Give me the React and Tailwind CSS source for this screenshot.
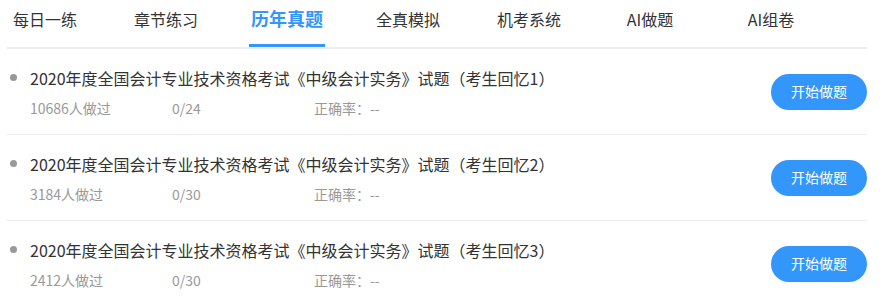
import React, { useState } from 'react';

const tabs = ['每日一练', '章节练习', '历年真题', '全真模拟', '机考系统', 'AI做题', 'AI组卷'];

const papers = [
  { title: '2020年度全国会计专业技术资格考试《中级会计实务》试题（考生回忆1）', done: 10686, progress: '0/24' },
  { title: '2020年度全国会计专业技术资格考试《中级会计实务》试题（考生回忆2）', done: 3184, progress: '0/30' },
  { title: '2020年度全国会计专业技术资格考试《中级会计实务》试题（考生回忆3）', done: 2412, progress: '0/30' },
];

const App = () => {
  const [activeTab, setActiveTab] = useState(2);

  return (
    <div
      className="w-[860px] ml-[7px] bg-white"
      style={{ fontFamily: '"Noto Sans CJK SC", "Noto Sans", sans-serif' }}
    >
      {/* Tabs */}
      <div className="flex gap-[45px] h-[49px] border-b-2 border-[#eeeeee]">
        {tabs.map((tab, index) => (
          <button
            key={tab}
            onClick={() => setActiveTab(index)}
            className={`w-[76px] h-[47px] flex items-start justify-center border-b-[3px] whitespace-nowrap ${
              activeTab === index
                ? 'border-[#3296fa] text-[#3296fa] text-[18px] font-bold leading-[24px] pt-[6px]'
                : 'border-transparent text-[#333333] text-[16px] leading-[24px] pt-[7px]'
            }`}
          >
            {tab}
          </button>
        ))}
      </div>

      {/* Paper list */}
      <div>
        {papers.map((paper) => (
          <div
            key={paper.title}
            className="flex items-center justify-between h-[86px] border-b border-[#eeeeee]"
          >
            <div className="flex flex-col">
              <div className="flex items-center">
                <span className="w-[7px] h-[7px] ml-[3px] rounded-full bg-[#999999]" />
                <span className="ml-[13px] text-[16px] leading-[24px] text-[#333333]">
                  {paper.title}
                </span>
              </div>
              <div className="flex mt-[8px] pl-[23px] text-[14px] leading-[20px] text-[#999999]">
                <span className="w-[142px]">{paper.done}人做过</span>
                <span className="w-[142px]">{paper.progress}</span>
                <span>正确率：--</span>
              </div>
            </div>
            <button className="w-[96px] h-[36px] rounded-full bg-[#3396fa] text-white text-[14px]">
              开始做题
            </button>
          </div>
        ))}
      </div>
    </div>
  );
};

export default App;
